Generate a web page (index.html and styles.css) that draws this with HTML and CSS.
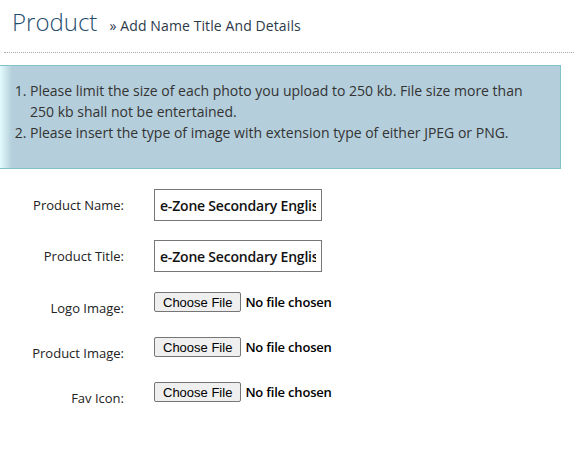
FILE: index.html
```html
<!DOCTYPE html>
<html lang="en">
<head>
    <meta charset="UTF-8">
    <meta name="viewport" content="width=device-width, initial-scale=1.0">
    <title>Product</title>
    <link rel="stylesheet" href="styles.css">
</head>
<body>
    <div class="page-header">
        <h1>Product <small>&raquo; Add Name Title And Details</small></h1>
    </div>
    <div class="alert-info">
        <ol>
            <li>Please limit the size of each photo you upload to 250 kb. File size more than 250 kb shall not be entertained.</li>
            <li>Please insert the type of image with extension type of either JPEG or PNG.</li>
        </ol>
    </div>
    <form class="product-form">
        <div class="form-row">
            <label for="pname">Product Name:</label>
            <input type="text" id="pname" class="text-input" value="e-Zone Secondary English">
        </div>
        <div class="form-row">
            <label for="ptitle">Product Title:</label>
            <input type="text" id="ptitle" class="text-input" value="e-Zone Secondary English">
        </div>
        <div class="form-row file-row">
            <label for="logo">Logo Image:</label>
            <input type="file" id="logo" class="file-input">
        </div>
        <div class="form-row file-row">
            <label for="pimage">Product Image:</label>
            <input type="file" id="pimage" class="file-input">
        </div>
        <div class="form-row file-row">
            <label for="favicon">Fav Icon:</label>
            <input type="file" id="favicon" class="file-input">
        </div>
    </form>
</body>
</html>
```

FILE: styles.css
```css
body {
    margin: 0;
    font-family: "Open Sans", "Noto Sans", sans-serif;
    color: #333;
    background: #fff;
}
.page-header {
    margin: 0 5px 0 4px;
    padding: 4px 0 8px 8px;
    border-bottom: 1px dotted #aaa;
}
.page-header h1 {
    margin: 0;
    font-size: 24px;
    font-weight: 300;
    line-height: 36px;
    color: #1f4d6e;
}
.page-header small {
    margin-left: 6px;
    font-size: 14px;
    font-weight: 400;
    letter-spacing: 0.1px;
    color: #2d3a4a;
}
.alert-info {
    margin: 12px 18px 0 0;
    padding: 14px 16px 25px 16px;
    background: linear-gradient(to right, #e2fbfd 0, #b4cedb 12px);
    border: 1px solid #80c2ca;
    border-left: none;
    font-size: 14px;
    line-height: 21px;
    color: #333;
}
.alert-info ol {
    margin: 0;
    padding-left: 14px;
}
.product-form {
    display: flex;
    flex-direction: column;
    gap: 19px;
    padding-top: 20px;
}
.form-row {
    display: flex;
    align-items: center;
}
.form-row label {
    width: 124px;
    margin-right: 30px;
    text-align: right;
    font-size: 13px;
    color: #222;
}
.text-input {
    box-sizing: border-box;
    width: 168px;
    height: 32px;
    padding: 0 5px;
    border: 1px solid #777;
    font-family: "Open Sans", sans-serif;
    font-size: 14px;
    font-weight: 600;
    letter-spacing: -0.2px;
    color: #111;
}
.file-row {
    align-items: flex-start;
}
.file-row label {
    padding-top: 8px;
}
.file-input {
    padding-top: 1px;
    font-family: "Open Sans", sans-serif;
    font-size: 13px;
    font-weight: 600;
    letter-spacing: -0.2px;
    color: #000;
}
.file-input::file-selector-button {
    font-family: "Liberation Sans", Arial, sans-serif;
    font-size: 13px;
    font-weight: 400;
    letter-spacing: 0;
    padding: 2px 8px 1px;
    margin-right: 4px;
    border: 1px solid #767676;
    border-radius: 2px;
    background: #efefef;
    color: #000;
}
```
